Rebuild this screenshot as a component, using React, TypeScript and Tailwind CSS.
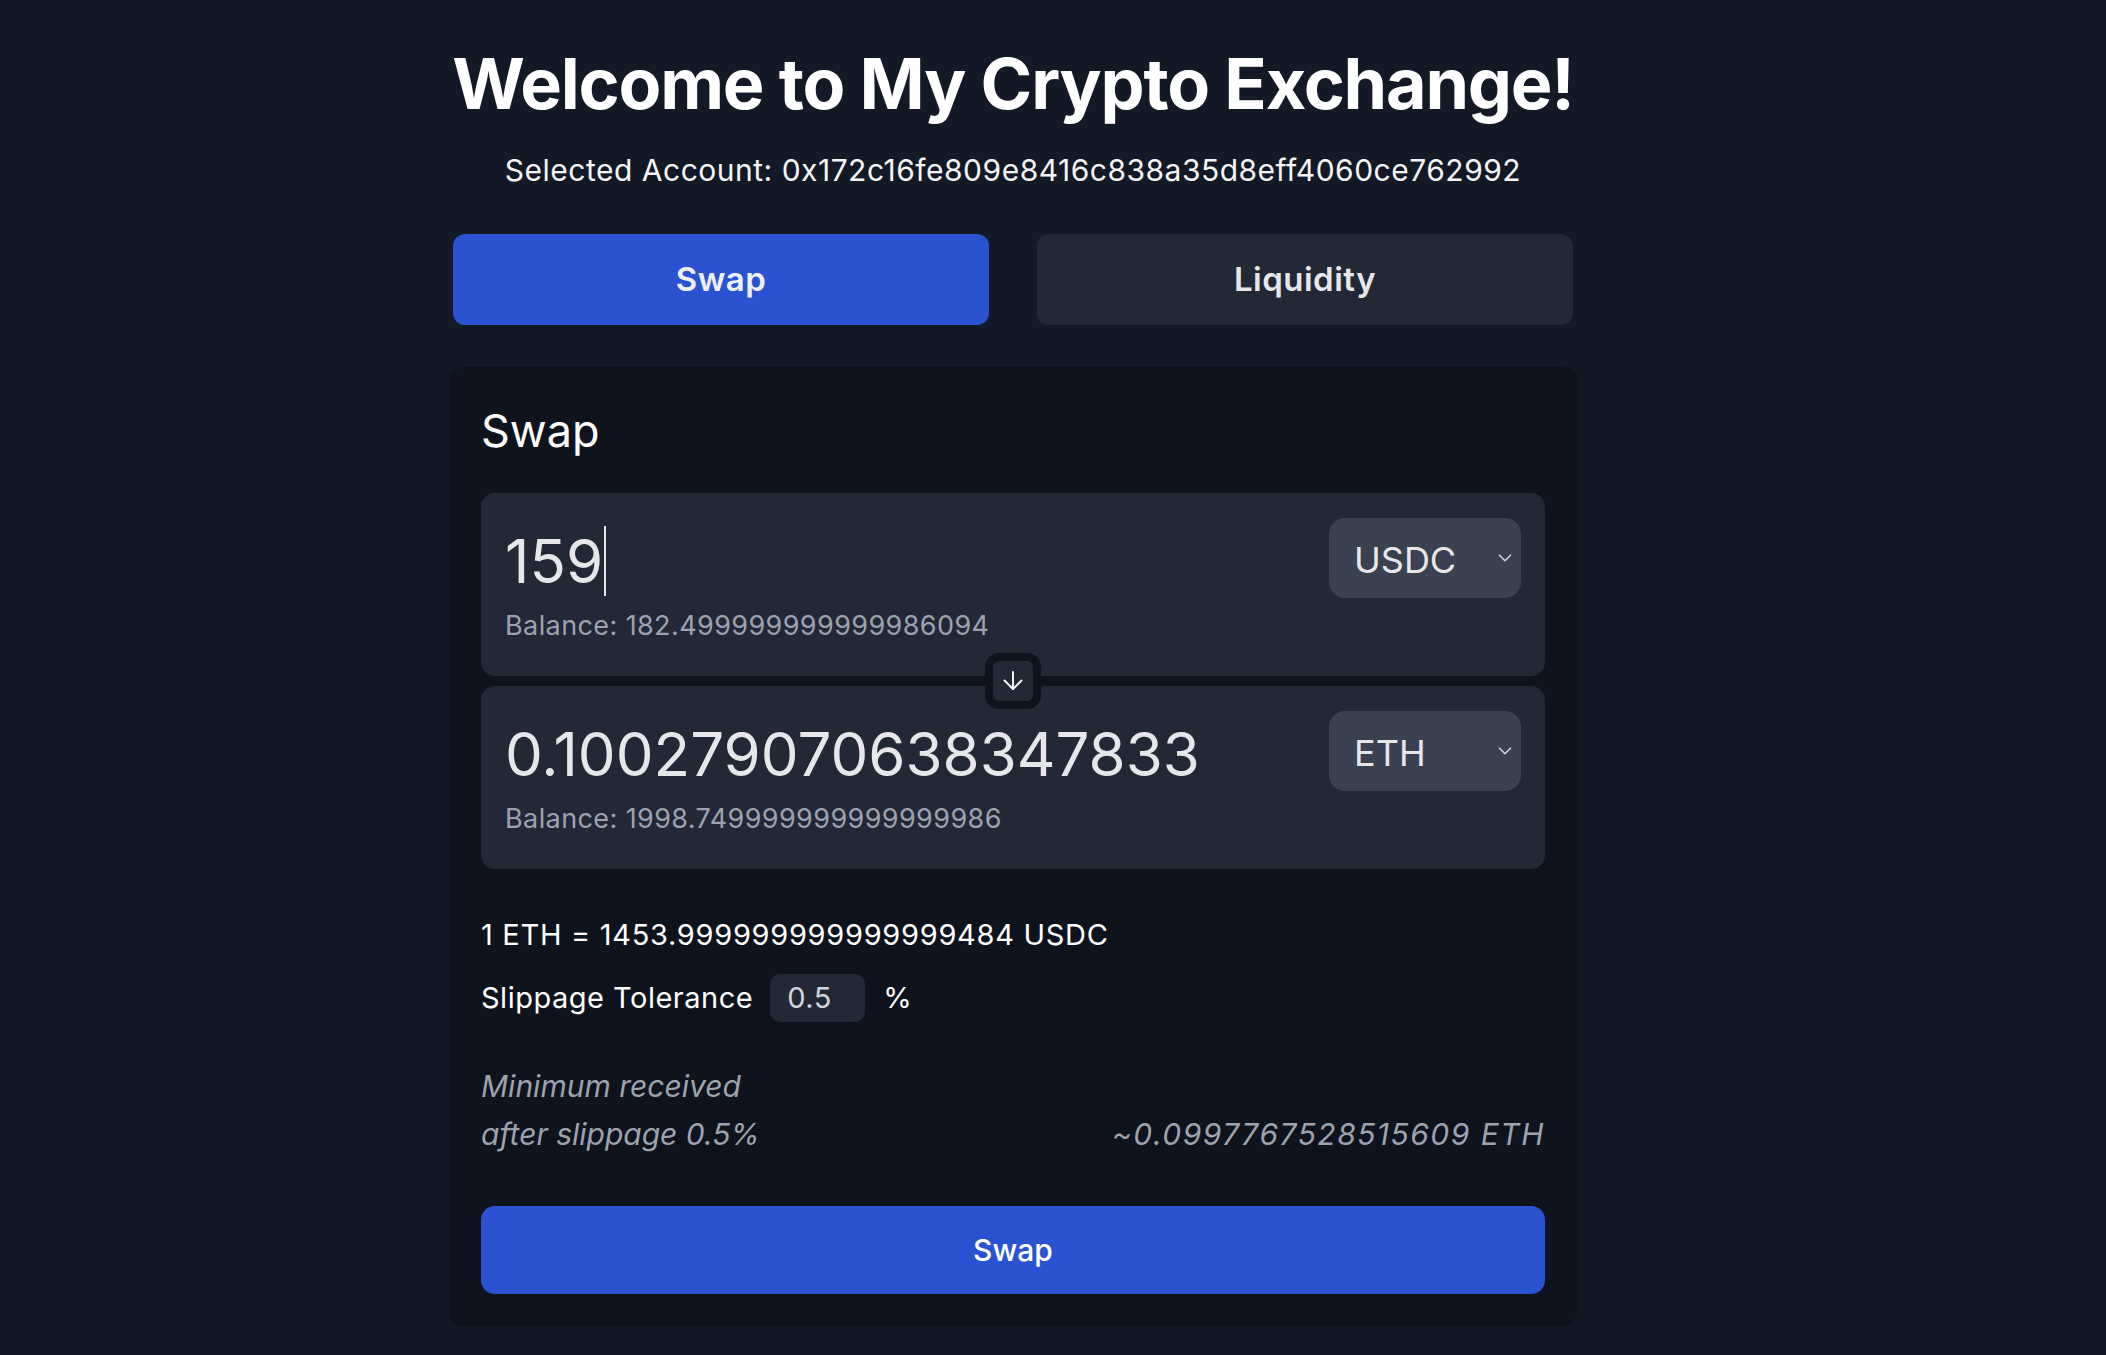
import { ChevronDown } from "lucide-react";

const account = "0x172c16fe809e8416c838a35d8eff4060ce762992";

interface TokenBoxProps {
  amount: string;
  token: string;
  balance: string;
  caret?: boolean;
}

function TokenBox({ amount, token, balance, caret }: TokenBoxProps) {
  return (
    <div className="rounded-[14px] bg-[#222836] px-[24px] pt-[25px] pb-[34px]">
      <div className="flex h-[80px] items-center justify-between">
        <div className="flex items-center pt-[6px] text-[60px] leading-[80px] text-[#e5e7eb]">
          <span>{amount}</span>
          {caret && <span className="ml-[1px] inline-block h-[70px] w-[2px] bg-[#e5e7eb]" />}
        </div>
        <div className="flex h-[80px] w-[192px] items-center justify-between rounded-[16px] bg-[#3a4150] pl-[25px] pr-[5px]">
          <span className="pt-[3px] text-[36px] leading-[44px] text-[#e5e7eb]">{token}</span>
          <ChevronDown size={22} strokeWidth={1.8} className="text-[#d1d5db]" />
        </div>
      </div>
      <div className="mt-[12px] text-[27px] leading-[32px] tracking-[0.4px] text-[#9ca3af]">
        Balance: {balance}
      </div>
    </div>
  );
}

export default function App() {
  return (
    <div className="min-h-screen bg-[#131927] font-['Inter','Noto_Sans',sans-serif] text-white">
      <div className="flex justify-center pr-[80px] pt-[40px] pb-[29px]">
        <div className="flex w-[1120px] flex-col items-center">
          <h1 className="whitespace-nowrap text-[70px] leading-[88px] font-bold tracking-[-1.2px]">
            Welcome to My Crypto Exchange!
          </h1>
          <p className="mt-[25px] text-[30px] leading-[34px] tracking-[0.5px] text-[#f3f4f6]">
            Selected Account: {account}
          </p>

          {/* tabs */}
          <div className="mt-[47px] grid w-full grid-cols-2 gap-[48px]">
            <button className="h-[91px] rounded-[12px] bg-[#2b53d1] text-[33px] font-semibold tracking-[0.5px] text-[#eef0f6]">
              Swap
            </button>
            <button className="h-[91px] rounded-[12px] bg-[#222836] text-[33px] font-semibold tracking-[0.5px] text-[#e5e7eb]">
              Liquidity
            </button>
          </div>

          {/* swap card */}
          <div className="mt-[42px] w-[1128px] rounded-[14px] bg-[#0f131e] px-[32px] pt-[37px] pb-[32px]">
            <h2 className="text-[45px] leading-[54px] font-normal">Swap</h2>

            <div className="relative mt-[35px] flex flex-col gap-[10px]">
              <TokenBox amount="159" token="USDC" balance="182.499999999999986094" caret />
              <TokenBox amount="0.100279070638347833" token="ETH" balance="1998.749999999999999986" />
              <div className="absolute left-1/2 top-[160px] flex h-[56px] w-[56px] -translate-x-1/2 items-center justify-center rounded-[14px] border-[8px] border-[#0f131e] bg-[#222836]">
                <svg width="24" height="22" viewBox="0 0 24 22" fill="none" stroke="#f3f4f6" strokeWidth="2" strokeLinecap="round" strokeLinejoin="round">
                  <path d="M12 2v17" />
                  <path d="M3.5 10.5 12 19l8.5-8.5" />
                </svg>
              </div>
            </div>

            <p className="mt-[49px] text-[29px] leading-[34px] tracking-[0.7px]">
              1 ETH = 1453.999999999999999484 USDC
            </p>

            <div className="mt-[22px] flex h-[48px] items-center text-[29px] leading-[34px] tracking-[0.5px]">
              <span>Slippage Tolerance</span>
              <div className="ml-[17px] flex h-[48px] w-[95px] items-center rounded-[10px] bg-[#222836] pl-[17px] text-[#d1d5db]">
                0.5
              </div>
              <span className="ml-[18px]">%</span>
            </div>

            <div className="mt-[40px] flex items-end justify-between text-[30px] leading-[48px] italic text-[#9ca3af]">
              <div>
                <div>Minimum received</div>
                <div>after slippage 0.5%</div>
              </div>
              <div className="tracking-[1.5px]">~0.0997767528515609 ETH</div>
            </div>

            <button className="mt-[48px] h-[88px] w-full rounded-[14px] bg-[#2b53d1] text-[30px] font-medium text-white">
              Swap
            </button>
          </div>
        </div>
      </div>
    </div>
  );
}
